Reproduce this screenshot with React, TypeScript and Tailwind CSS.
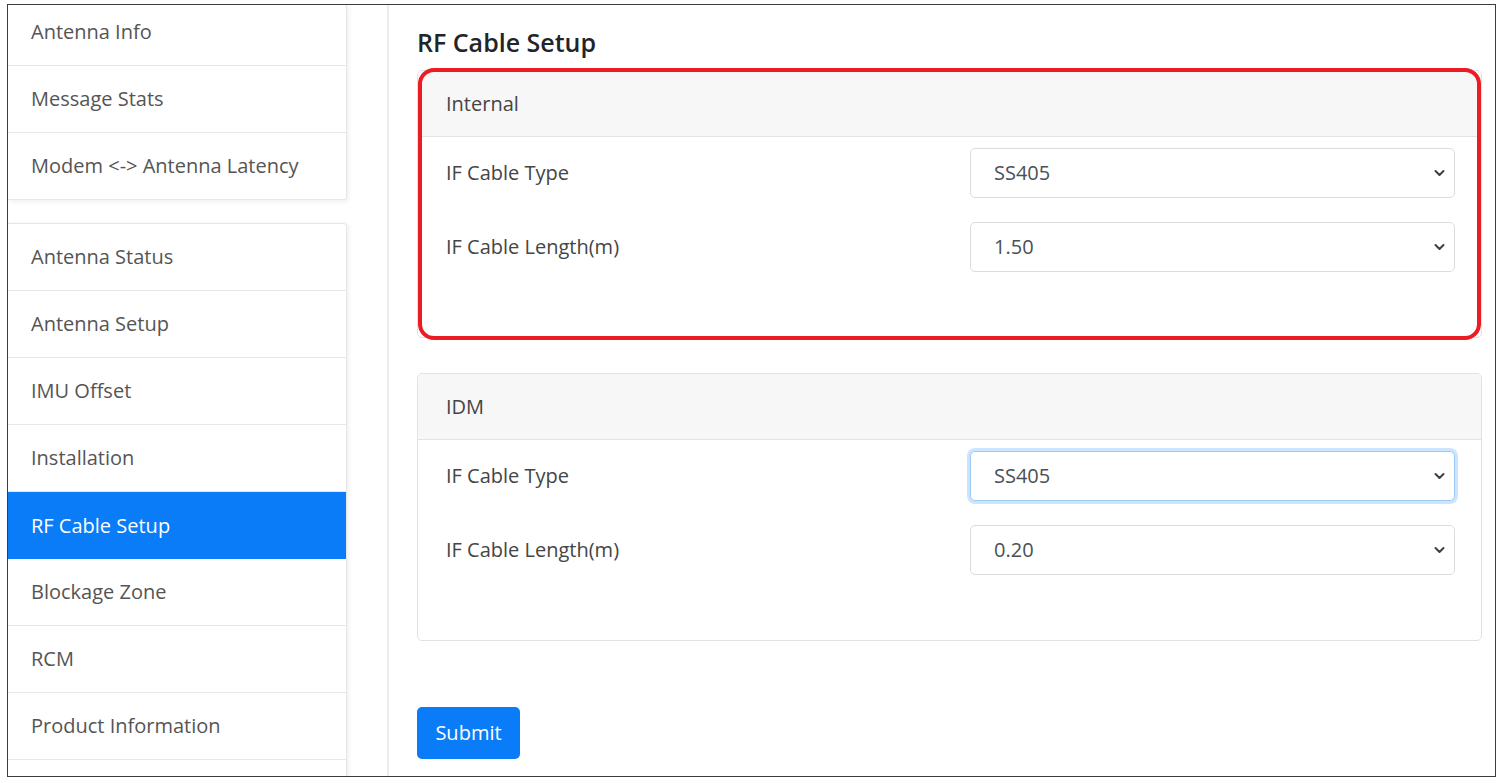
import React from "react";

const font = { fontFamily: '"Open Sans", "Noto Sans", sans-serif' };

function Chevron() {
  return (
    <svg width="11" height="7" viewBox="0 0 11 7" className="absolute right-[9px] top-1/2 -translate-y-1/2">
      <path d="M1.5 1.5 L5.5 5.5 L9.5 1.5" fill="none" stroke="#3a3f44" strokeWidth="2" strokeLinecap="round" strokeLinejoin="round" />
    </svg>
  );
}

function Select({ value, focused }: { value: string; focused?: boolean }) {
  return (
    <div
      className={
        "relative w-[485px] h-[50px] rounded-[5px] bg-white flex items-center pl-[23px] text-[20px] text-[#495057] " +
        (focused
          ? "border border-[#9cc8f5] shadow-[0_0_0_3px_rgba(0,123,255,0.2)]"
          : "border border-[#dcdcdc]")
      }
    >
      {value}
      <Chevron />
    </div>
  );
}

function Row({ label, value, focused }: { label: string; value: string; focused?: boolean }) {
  return (
    <div className="flex items-center">
      <div className="flex-1 text-[20px] text-[#454545]">{label}</div>
      <Select value={value} focused={focused} />
    </div>
  );
}

function Card({ title, a, b, focused }: { title: string; a: string; b: string; focused?: boolean }) {
  return (
    <div className="w-[1065px] h-[268px] border border-[#e2e2e2] rounded-[5px] bg-white overflow-hidden flex flex-col">
      <div className="h-[66px] bg-[#f7f7f7] border-b border-[#e3e3e3] flex items-center pl-[28px] text-[20px] text-[#454545] shrink-0">
        {title}
      </div>
      <div className="pl-[28px] pr-[26px] pt-[11px] flex flex-col gap-[24px]">
        <Row label="IF Cable Type" value={a} focused={focused} />
        <Row label="IF Cable Length(m)" value={b} />
      </div>
    </div>
  );
}

const group1 = ["Antenna Info", "Message Stats", "Modem <-> Antenna Latency"];
const group2 = [
  "Antenna Status",
  "Antenna Setup",
  "IMU Offset",
  "Installation",
  "RF Cable Setup",
  "Blockage Zone",
  "RCM",
  "Product Information",
  "",
];

export default function App() {
  return (
    <div className="w-[1503px] h-[783px] bg-white relative overflow-hidden" style={font}>
      <div className="absolute left-[7px] top-[4px] w-[1489px] h-[773px] border border-[#3c3c3c] overflow-hidden flex bg-white">
        {/* Sidebar */}
        <div className="w-[339px] shrink-0 flex flex-col">
          <div className="flex flex-col bg-white border-r border-[#e6e6e6] rounded-br-[4px] shadow-[2px_2px_4px_rgba(0,0,0,0.06)]">
            {group1.map((t, i) => (
              <div
                key={t}
                className={
                  "flex items-center pl-[23px] text-[20px] text-[#555] border-b border-[#e8e8e8] " +
                  (i === 0 ? "h-[61px] pb-[6px]" : "h-[67px]")
                }
              >
                {t}
              </div>
            ))}
          </div>
          <div className="mt-[23px] flex flex-col bg-white border-t border-r border-[#e6e6e6] rounded-tr-[4px] shadow-[2px_0_4px_rgba(0,0,0,0.06)]">
            {group2.map((t, i) =>
              t === "RF Cable Setup" ? (
                <div key={i} className="h-[67px] flex items-center pl-[23px] text-[20px] text-white bg-[#0a7cf7]">
                  {t}
                </div>
              ) : (
                <div key={i} className="h-[67px] flex items-center pl-[23px] text-[20px] text-[#555] border-b border-[#e8e8e8]">
                  {t}
                </div>
              )
            )}
          </div>
        </div>
        {/* Main */}
        <div className="ml-[40px] flex-1 border-l-2 border-[#ececec] pl-[28px] flex flex-col">
          <div className="h-[65px] flex items-center text-[25px] font-semibold text-[#212529] pt-[20px] pb-[10px]">
            RF Cable Setup
          </div>
          <div className="relative">
            <Card title="Internal" a="SS405" b="1.50" />
            <div className="absolute left-[1px] top-[-2px] w-[1063px] h-[272px] border-[4px] border-[#ec1c24] rounded-[16px] pointer-events-none" />
          </div>
          <div className="mt-[35px]">
            <Card title="IDM" a="SS405" b="0.20" focused />
          </div>
          <div className="mt-[66px]">
            <button className="w-[103px] h-[52px] rounded-[5px] bg-[#0a7cf7] text-white text-[20px]">Submit</button>
          </div>
        </div>
      </div>
    </div>
  );
}
